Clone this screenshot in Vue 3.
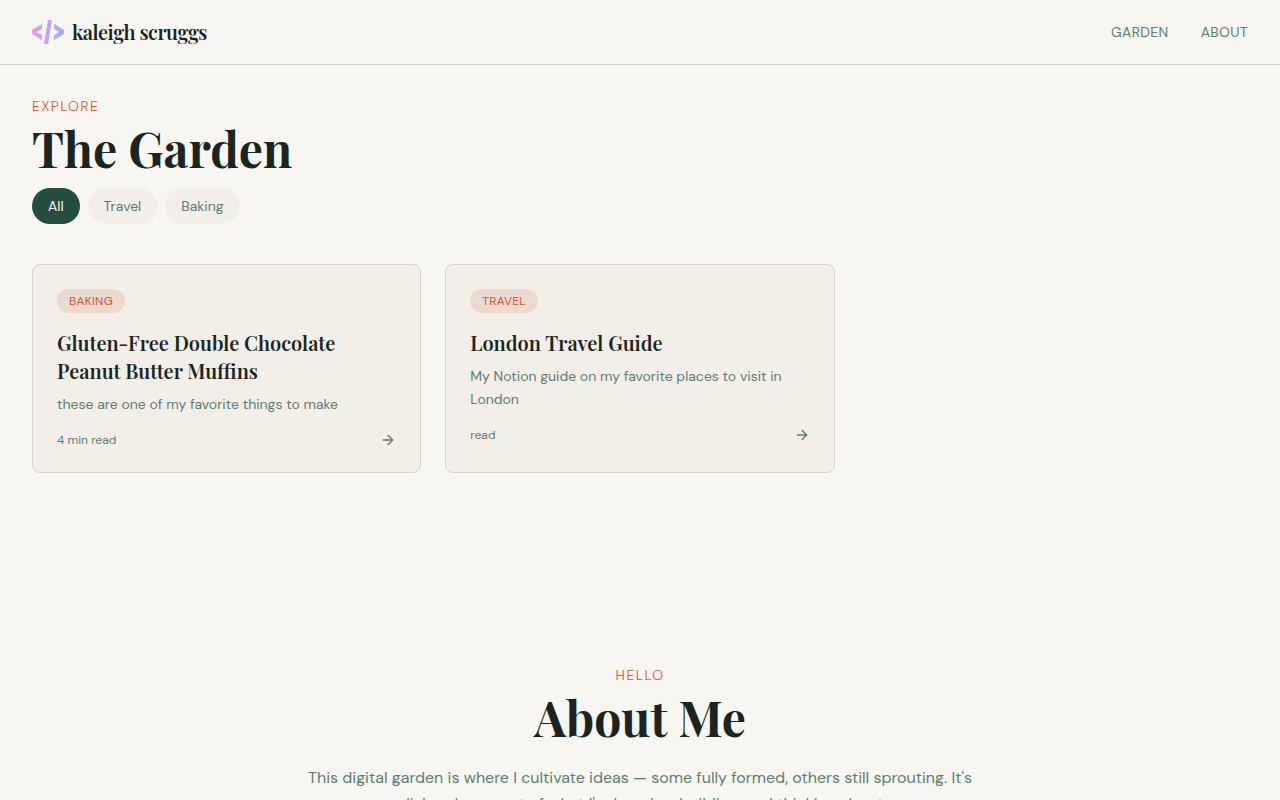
<script setup>
import { computed, ref } from 'vue'

const categories = ['All', 'Travel', 'Baking']
const active = ref('All')

const posts = [
  {
    slug: 'double-chocolate-muffins',
    category: 'Baking',
    title: 'Gluten-Free Double Chocolate Peanut Butter Muffins',
    excerpt: 'these are one of my favorite things to make',
    meta: '4 min read',
  },
  {
    slug: 'london-travel-guide',
    category: 'Travel',
    title: 'London Travel Guide',
    excerpt: 'My Notion guide on my favorite places to visit in London',
    meta: 'read',
  },
]

const visible = computed(() =>
  active.value === 'All' ? posts : posts.filter((p) => p.category === active.value)
)
</script>

<template>
  <div class="page">
    <header class="site-header">
      <a class="brand" href="#">
        <svg class="logo" viewBox="0 0 32 24" aria-hidden="true">
          <defs>
            <linearGradient id="logo-fill" gradientUnits="userSpaceOnUse" x1="0" y1="0" x2="32" y2="0">
              <stop offset="0" stop-color="#e2a0e0" />
              <stop offset="0.5" stop-color="#c3a7ee" />
              <stop offset="1" stop-color="#9fabff" />
            </linearGradient>
          </defs>
          <g fill="url(#logo-fill)">
            <path d="M10 4v5L4.500 12 10 15v5L0 14V10z" />
            <path d="M16 0h4l-4 24h-4z" />
            <path d="M22 4v5L27.500 12 22 15v5L32 14V10z" />
          </g>
        </svg>
        <span>kaleigh scruggs</span>
      </a>
      <nav class="nav" aria-label="Main">
        <a href="#garden">Garden</a>
        <a href="#about">About</a>
      </nav>
    </header>

    <main>
      <section id="garden" class="garden">
        <p class="eyebrow">Explore</p>
        <h1 class="heading">The Garden</h1>
        <div class="filters">
          <button
            v-for="c in categories"
            :key="c"
            type="button"
            class="pill"
            :class="{ active: c === active }"
            :aria-pressed="c === active"
            @click="active = c"
          >{{ c }}</button>
        </div>
        <div class="cards">
          <a v-for="p in visible" :key="p.slug" class="card" :href="'#' + p.slug">
            <span class="badge">{{ p.category }}</span>
            <h2 class="title">{{ p.title }}</h2>
            <p class="excerpt">{{ p.excerpt }}</p>
            <div class="card-foot">
              <span>{{ p.meta }}</span>
              <svg class="arrow" viewBox="0 0 24 24" aria-hidden="true">
                <path d="M5 12h14M12 5l7 7-7 7" />
              </svg>
            </div>
          </a>
        </div>
      </section>

      <section id="about" class="about">
        <p class="eyebrow">Hello</p>
        <h2 class="heading">About Me</h2>
        <p class="intro">
          This digital garden is where I cultivate ideas — some fully formed, others still sprouting.
          It's a living document of what I'm learning, building, and thinking about.
        </p>
      </section>
    </main>
  </div>
</template>

<style>
body {
  background: #f7f6f1;
}
</style>

<style scoped>
.page {
  --ink: #1a2421;
  --muted: #5f7d70;
  --accent: #d4582f;
  --line: #d8d3c8;
  --surface: #f3eee8;
  --serif: "Playfair Display", "Liberation Serif", serif;
  min-height: 100vh;
  background: #f7f6f1;
  color: var(--ink);
  font-family: "DM Sans", Inter, sans-serif;
  font-size: 14px;
  font-weight: 400;
  line-height: 20px;
}
p,
h1,
h2 {
  margin: 0;
}
a {
  color: inherit;
  text-decoration: none;
}
.site-header {
  display: flex;
  align-items: center;
  justify-content: space-between;
  height: 64px;
  padding: 0 32px;
  border-bottom: 1px solid var(--line);
}
.brand {
  display: flex;
  align-items: center;
  gap: 8px;
  font: 600 20px/28px var(--serif);
  letter-spacing: -0.025em;
}
.logo {
  width: 32px;
  height: 24px;
}
.nav {
  display: flex;
  gap: 32px;
  color: var(--muted);
  text-transform: uppercase;
  letter-spacing: 0.025em;
}
.garden {
  padding: 31px 32px 96px;
}
.eyebrow {
  color: var(--accent);
  font-weight: 300;
  text-transform: uppercase;
  letter-spacing: 0.1em;
}
.heading {
  font: 700 48px/48px var(--serif);
  margin-top: 8px;
}
.filters {
  display: flex;
  gap: 8px;
  margin: 16px 0 40px;
}
.pill {
  padding: 8px 16px;
  border: 0;
  border-radius: 18px;
  background: var(--surface);
  color: var(--muted);
  font: inherit;
  cursor: pointer;
}
.pill.active {
  background: #234e3f;
  color: #f7f6f1;
}
.cards {
  display: grid;
  grid-template-columns: repeat(3, minmax(0, 1fr));
  gap: 24px;
}
.card {
  padding: 24px;
  border: 1px solid var(--line);
  border-radius: 8px;
  background: var(--surface);
}
.badge {
  display: block;
  width: fit-content;
  padding: 4px 12px;
  border-radius: 12px;
  background: #ecd9cf;
  color: var(--accent);
  font-size: 12px;
  line-height: 16px;
  text-transform: uppercase;
  letter-spacing: 0.025em;
}
.title {
  margin-top: 16px;
  font: 600 20px/28px var(--serif);
}
.excerpt {
  margin-top: 8px;
  color: var(--muted);
  line-height: 23px;
}
.card-foot {
  display: flex;
  align-items: center;
  justify-content: space-between;
  margin-top: 16px;
  color: var(--muted);
  font-size: 12px;
  line-height: 16px;
}
.arrow {
  width: 16px;
  height: 16px;
  fill: none;
  stroke: currentColor;
  stroke-width: 2;
  stroke-linecap: round;
  stroke-linejoin: round;
}
.about {
  max-width: 672px;
  margin: 0 auto;
  padding: 96px 32px;
  text-align: center;
}
.intro {
  margin-top: 24px;
  color: var(--muted);
  font-size: 16px;
  line-height: 26px;
}
</style>
